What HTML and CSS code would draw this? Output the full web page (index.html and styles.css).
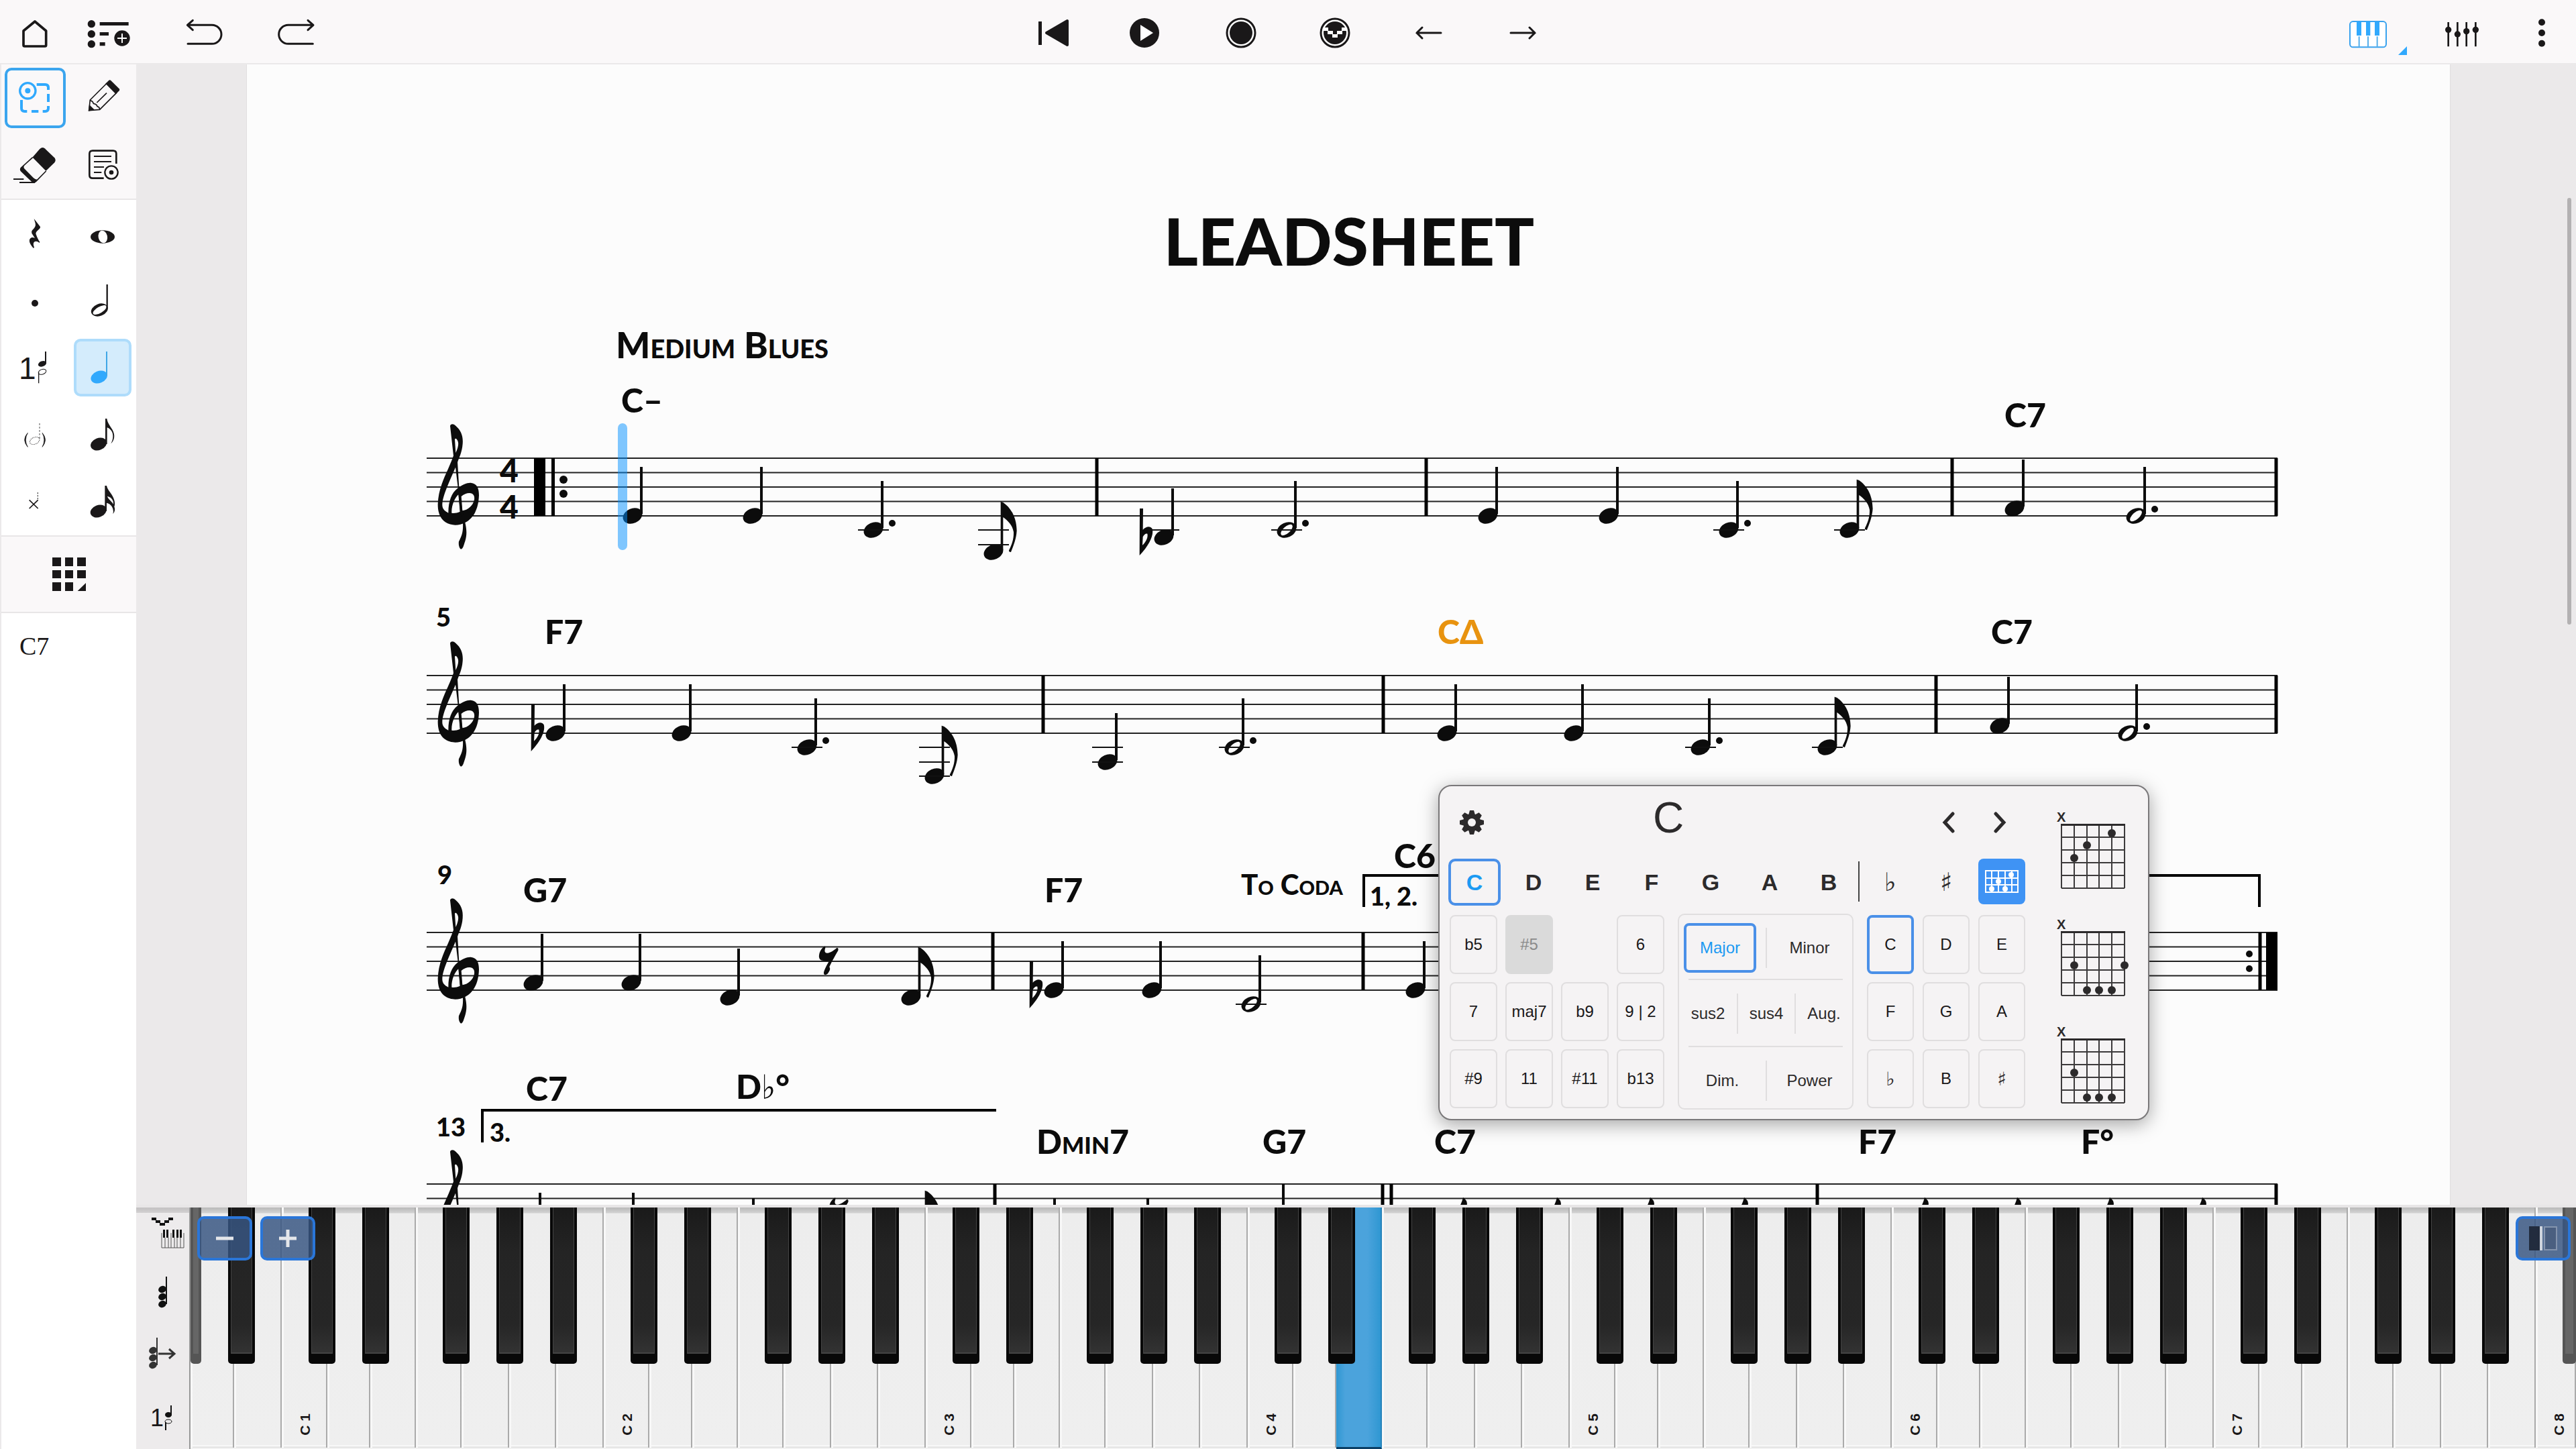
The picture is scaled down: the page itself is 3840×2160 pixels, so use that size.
FILE: index.html
```html
<!DOCTYPE html>
<html lang="en">
<head>
<meta charset="utf-8">
<title>Leadsheet</title>
<link rel="stylesheet" href="styles.css">
</head>
<body>
<header class="topbar">
  <div class="bar-group bar-left">
    <div class="bar-pair pair-tight">
      <button class="tool" aria-label="Home"><svg viewBox="60 0 192 282"><path d="M156 96 L206 138 V202 Q206 207 201 207 H110 Q105 207 105 202 V138 Z" fill="none" stroke="#1a1819" stroke-width="11" stroke-linejoin="round"/></svg></button>
      <button class="tool" aria-label="Add to setlist"><svg viewBox="390 0 192 282"><g fill="#1a1819"><circle cx="409" cy="107" r="17"/><circle cx="409" cy="152" r="17"/><circle cx="409" cy="197" r="17"/><path d="M446 99h129v15H446zM446 144h40v15h-40zM446 189h24v16h-24z"/><circle cx="546" cy="171" r="35"/></g><path d="M546 150v42M525 171h42" stroke="#fff" stroke-width="6"/></svg></button>
    </div>
    <div class="bar-pair pair-wide">
      <button class="tool" aria-label="Undo"><svg viewBox="819 0 192 282"><path d="M862 91 L838 112 L862 134 M840 112 H948 A42 42 0 0 1 948 196 H840" fill="none" stroke="#1a1819" stroke-width="9" stroke-linecap="round" stroke-linejoin="round"/></svg></button>
      <button class="tool" aria-label="Redo"><svg viewBox="1227 0 192 282"><path d="M1377 91 L1401 112 L1377 134 M1399 112 H1289 A42 42 0 0 0 1289 196 H1399" fill="none" stroke="#1a1819" stroke-width="9" stroke-linecap="round" stroke-linejoin="round"/></svg></button>
    </div>
  </div>
  <div class="bar-group bar-center">
    <button class="tool" aria-label="Back to start"><svg viewBox="1537 0 64 94"><path d="M1547 32h5v35h-5z" fill="#1a1819"/><path d="M1559 49 L1590 31 V67 Z" fill="#1a1819" stroke="#1a1819" stroke-width="4" stroke-linejoin="round"/></svg></button>
    <button class="tool" aria-label="Play"><svg viewBox="1677 0 64 94"><circle cx="1705" cy="49" r="22" fill="#1a1819"/><path d="M1699 37 L1718 49 L1699 61Z" fill="#fff"/></svg></button>
    <button class="tool" aria-label="Record"><svg viewBox="1817 0 64 94"><circle cx="1849" cy="49" r="21" fill="#fff" stroke="#1a1819" stroke-width="3"/><circle cx="1849" cy="49" r="17" fill="#1a1819"/></svg></button>
    <button class="tool" aria-label="Record MIDI"><svg viewBox="1957 0 64 94"><circle cx="1989" cy="49" r="21" fill="#fff" stroke="#1a1819" stroke-width="3"/><circle cx="1989" cy="49" r="17" fill="#1a1819"/><path d="M1971 41h8v5h-8zM1978 46h8v5h-8zM1985 51h8v5h-8zM1992 46h8v5h-8zM1999 41h8v5h-8z" fill="#fff"/></svg></button>
    <button class="tool" aria-label="Previous"><svg viewBox="2097 0 64 94"><path d="M2147 49H2111M2119 41L2111 49L2119 57" fill="none" stroke="#1a1819" stroke-width="3" stroke-linecap="round"/></svg></button>
    <button class="tool" aria-label="Next"><svg viewBox="2237 0 64 94"><path d="M2251 49H2287M2279 41L2287 49L2279 57" fill="none" stroke="#1a1819" stroke-width="3" stroke-linecap="round"/></svg></button>
  </div>
  <div class="bar-group bar-right">
    <button class="tool tool-piano" aria-label="Keyboard"><svg viewBox="354 0 192 282"><rect x="369" y="96" width="162" height="115" rx="14" fill="#fff" stroke="#3aa2ee" stroke-width="6"/><path d="M399 96h21v63h-21zM441 96h19v63h-19zM480 96h21v63h-21z" fill="#31a9fd"/><path d="M410 163v46M450 163v46M491 163v46" stroke="#55aeea" stroke-width="6"/></svg></button>
    <button class="tool tool-mixer" aria-label="Mixer"><svg viewBox="774 0 192 282"><path d="M809 99v109M850 99v109M890 99v109M931 99v109" stroke="#1a1819" stroke-width="8"/><g fill="#1a1819"><circle cx="809" cy="133" r="14"/><circle cx="850" cy="153" r="14"/><circle cx="890" cy="140" r="14"/><circle cx="931" cy="133" r="14"/></g></svg></button>
    <button class="tool" aria-label="More"><svg viewBox="1131 0 192 282"><g fill="#1a1819"><circle cx="1227" cy="100" r="15"/><circle cx="1227" cy="147" r="15"/><circle cx="1227" cy="194" r="15"/></g></svg></button>
  </div>
</header>

<div class="workspace">
  <aside class="sidebar">
    <div class="side-section side-tinted">
      <button class="cell" aria-label="Select"><span class="select-frame"></span><svg viewBox="6 288 300 300"><g fill="none" stroke="#31a9fd"><circle cx="124" cy="406" r="35" stroke-width="10"/><path d="M164 378H202Q216 378 216 392V402M216 420V456M216 474V484Q216 498 202 498H191M172 498H141M121 498H110Q96 498 96 484V447" stroke-width="12"/></g><circle cx="124" cy="406" r="12" fill="#31a9fd"/></svg></button>
      <button class="cell" aria-label="Pencil"><svg viewBox="306 288 300 300"><path d="M475 372L400 447L395 494L443 490L518 415Z" fill="#faf8f9" stroke="#1a1819" stroke-width="5" stroke-linejoin="round"/><path d="M469 374L484 359Q488 356 492 359L530 397Q534 402 530 406L515 421Z" fill="#1a1819"/><path d="M399 449Q412 452 415 463Q430 466 432 476Q442 478 443 490M430 459L474 416" fill="none" stroke="#1a1819" stroke-width="5"/><path d="M392 497L396 468L420 491Z" fill="#1a1819"/></svg></button>
      <button class="cell" aria-label="Eraser"><svg viewBox="6 588 300 300"><path d="M144 705L178 666Q189 655 200 664L244 706Q252 716 244 727L204 766Z" fill="#1a1819"/><path d="M146 704L95 750Q89 758 95 765L144 812Q152 819 160 812L206 765" fill="#faf8f9" stroke="#1a1819" stroke-width="5"/><path d="M110 738L95 750Q89 758 95 765L144 812Q152 819 160 812L166 802Q158 804 150 796L108 753Q104 746 110 738Z" fill="#1a1819"/><path d="M60 801H106M87 816H156" stroke="#1a1819" stroke-width="6"/></svg></button>
      <button class="cell" aria-label="Inspector"><svg viewBox="306 588 300 300"><path d="M461 797H411Q397 797 397 783V688Q397 674 411 674H503Q517 674 517 688V732" fill="none" stroke="#1a1819" stroke-width="8"/><path d="M417 699H495M417 723H495M417 747H462M417 771H451" stroke="#1a1819" stroke-width="6"/><circle cx="495" cy="771" r="29" fill="none" stroke="#1a1819" stroke-width="7"/><circle cx="495" cy="771" r="10" fill="#1a1819"/></svg></button>
    </div>
    <div class="side-section">
      <button class="cell" aria-label="Quarter rest"><svg viewBox="6 894 300 300"><path d="M152 978L180 1014Q181 1020 176 1024C162 1036 158 1042 162 1050C166 1062 172 1074 178 1082L176 1086C160 1072 142 1082 153 1106L150 1110C134 1094 126 1076 136 1066C142 1060 150 1062 156 1065L142 1043Q139 1036 144 1030C158 1016 160 1010 158 998Z" fill="#1a1819"/></svg></button>
      <button class="cell" aria-label="Whole note"><svg viewBox="306 894 300 300"><ellipse cx="456" cy="1059" rx="54" ry="29" fill="#1a1819"/><ellipse cx="457" cy="1059" rx="20" ry="28" fill="#fff" transform="rotate(-12 457 1059)"/></svg></button>
      <button class="cell" aria-label="Dotted"><svg viewBox="6 1194 300 300"><circle cx="156" cy="1356" r="15" fill="#1a1819"/></svg></button>
      <button class="cell" aria-label="Half note"><svg viewBox="306 1194 300 300"><ellipse cx="442" cy="1386" rx="39" ry="27" fill="#1a1819" transform="rotate(-22 442 1386)"/><ellipse cx="443" cy="1386" rx="34" ry="14" fill="#fff" transform="rotate(-30 443 1386)"/><path d="M476 1272V1380" stroke="#1a1819" stroke-width="7"/></svg></button>
      <button class="cell" aria-label="Voice 1"><span class="voice-number">1</span><svg viewBox="6 54 300 300"><ellipse cx="189" cy="187" rx="19" ry="12" fill="#1a1819" transform="rotate(-20 189 187)"/><path d="M204 132V184" stroke="#1a1819" stroke-width="6"/><ellipse cx="189" cy="223" rx="18" ry="11" fill="none" stroke="#1a1819" stroke-width="3" transform="rotate(-20 189 223)"/><path d="M173 225V274" stroke="#1a1819" stroke-width="4"/></svg></button>
      <button class="cell" aria-label="Quarter note" aria-pressed="true"><span class="note-frame"></span><svg viewBox="306 54 300 300"><ellipse cx="440" cy="246" rx="38" ry="27" fill="#31a9fd" transform="rotate(-22 440 246)"/><path d="M474 132V240" stroke="#3fa6e6" stroke-width="6"/></svg></button>
      <button class="cell" aria-label="Hidden note"><svg viewBox="6 354 300 300"><path d="M124 496Q96 527 124 559Q106 527 124 496ZM189 496Q216 527 189 559Q206 527 189 496Z" fill="#1a1819" stroke="#1a1819" stroke-width="2"/><ellipse cx="155" cy="531" rx="23" ry="15" fill="none" stroke="#1a1819" stroke-width="3" stroke-dasharray="3 4" transform="rotate(-24 155 531)"/><path d="M177 453V524" stroke="#777" stroke-width="4" stroke-dasharray="8 7"/></svg></button>
      <button class="cell" aria-label="Eighth note"><svg viewBox="306 354 300 300"><ellipse cx="438" cy="546" rx="37" ry="27" fill="#1a1819" transform="rotate(-22 438 546)"/><path d="M468 432H475C478 452 490 466 500 482C514 508 508 530 493 544C508 518 506 484 476 472V546H468Z" fill="#1a1819"/></svg></button>
      <button class="cell" aria-label="Cross note"><svg viewBox="6 654 300 300"><path d="M131 796L170 834M170 796L131 834" stroke="#1a1819" stroke-width="5"/><path d="M169 762V796" stroke="#555" stroke-width="4" stroke-dasharray="7 5"/></svg></button>
      <button class="cell" aria-label="Sixteenth note"><svg viewBox="306 654 300 300"><ellipse cx="437" cy="846" rx="37" ry="27" fill="#1a1819" transform="rotate(-22 437 846)"/><path d="M466 732H474C478 752 496 766 505 788C511 802 512 818 508 826C514 840 508 852 502 858C508 840 498 814 474 809V846H466ZM476 777C490 782 500 796 505 812C504 796 494 784 476 777Z" fill="#1a1819"/><path d="M477 779C480 792 496 800 504 815C504 798 494 784 477 779Z" fill="#fff"/></svg></button>
    </div>
    <button class="palette" aria-label="Palettes"><svg viewBox="0 0 150 150"><path d="M0 0h39v39H0zM57 0h36v39H57zM111 0h39v39h-39zM0 57h39v36H0zM57 57h36v36H57zM111 57h39v36h-39zM0 111h39v39H0zM57 111h36v39H57zM113 150L150 114V150Z" fill="#1a1819"/></svg></button>
    <div class="status-chord">C7</div>
  </aside>

  <main class="stage">
    <div class="canvas">
      <section class="sheet">
        <svg class="score" viewBox="368 96 3284 1700">
          <defs>
            <path id="staff" d="M0 0H2759M0 21.5H2759M0 43H2759M0 64.5H2759M0 86H2759" stroke="#222" stroke-width="2" fill="none"/>
            <g id="q"><ellipse rx="15" ry="11" transform="rotate(-24)"/><path d="M11-73h4V-3h-4z"/></g>
            <g id="h"><ellipse rx="15" ry="11" transform="rotate(-24)"/><ellipse rx="11" ry="5" transform="rotate(-42)" fill="#fcfcfc"/><path d="M11-73h4V-3h-4z"/></g>
            <g id="e"><ellipse rx="15" ry="11" transform="rotate(-24)"/><path transform="scale(.3333)" d="M32-226L43-222C75-200 103-160 104-95C102-60 90-30 78 0Q68 0 69-8C83-35 91-60 90-90C85-120 65-140 43-156V-10H32Z"/></g>
            <path id="fl" transform="scale(.3333)" fill-rule="evenodd" d="M-108-129L-93-129L-94-34C-80-50-60-52-52-38C-44-10-65 35-109 81ZM-94-2C-88-14-80-19-74-16C-70 0-80 20-96 35Z"/>
            <path id="r" transform="scale(.3333)" d="M-20-65Q-12-72-14-60C-20-45-15-36-5-37C10-38 25-50 38-61Q46-60 43-48C30-25 15 0 4 25Q10 35 3 45C-3 58-10 62-18 60Q-24 55-18 40C-12 25-3 10 3-2L-5 0C-15 0-20-3-28-4C-38-5-44-15-42-27C-40-45-30-58-20-65Z"/>
            <circle id="d" cx="28" cy="-10" r="5"/>
            <path id="sl" d="M-14 17Q-4 8 0-8Q6-4 6 2L0 17Z"/>
            <g id="clef" transform="scale(.3333) translate(-18 -369)"><path fill-rule="evenodd" d="M123 225C125 214 138 214 148 224C172 245 182 270 179 305C176 345 163 365 156 388C130 455 90 530 88 575C87 595 98 605 115 614C115 560 130 525 155 505C175 487 200 478 215 479C245 483 252 505 252 535C250 600 225 640 190 657C175 666 150 670 135 667C95 660 68 635 68 575C70 510 95 460 115 415C125 392 132 375 138 358ZM144 285L148 345C158 325 162 305 158 295C154 282 146 278 144 285ZM130 614C128 580 145 545 160 532L167 608C155 614 140 616 130 614ZM173 540C190 525 210 522 222 528C232 535 232 545 231 555C225 580 205 600 178 604Z"/><path d="M144 385L156 385L163 500L178 605L190 657C198 690 198 715 190 740C183 760 182 772 172 776C163 772 160 755 162 742C175 715 182 700 180 660L168 610L158 500Z"/></g>
          </defs>

          <text class="score-title" x="2011" y="396" text-anchor="middle">LEADSHEET</text>
          <text class="score-tempo" x="918" y="534">Medium Blues</text>

          <g class="ink">
            <use href="#staff" x="636" y="683"/><use href="#clef" x="636" y="683"/>
            <path d="M796 683h17v86h-17zM822 683h5v86h-5z" fill="#000"/><circle cx="840" cy="715" r="6"/><circle cx="840" cy="736" r="6"/>
            <use href="#q" x="943" y="769"/><use href="#q" x="1122" y="769"/><use href="#q" x="1302" y="790"/><use href="#d" x="1302" y="790"/><use href="#e" x="1481" y="823"/>
            <use href="#fl" x="1735" y="801"/><use href="#q" x="1735" y="801"/><use href="#h" x="1918" y="790"/><use href="#d" x="1918" y="790"/>
            <use href="#q" x="2218" y="769"/><use href="#q" x="2398" y="769"/><use href="#q" x="2577" y="790"/><use href="#d" x="2577" y="790"/><use href="#e" x="2757" y="790"/>
            <use href="#q" x="3003" y="758"/><use href="#h" x="3184" y="769"/><use href="#d" x="3184" y="769"/>
            <path class="ledger" d="M1279 790h46M1458 790h46M1458 812h46M1712 790h46M1895 790h46M2554 790h46M2734 790h46"/>
            <path class="bar" d="M1635 683v86M2126 683v86M2910 683v86M3393 683v86"/>

            <use href="#staff" x="636" y="1007"/><use href="#clef" x="636" y="1007"/>
            <use href="#fl" x="828" y="1093"/><use href="#q" x="828" y="1093"/><use href="#q" x="1016" y="1093"/><use href="#q" x="1203" y="1114"/><use href="#d" x="1203" y="1114"/><use href="#e" x="1393" y="1157"/>
            <use href="#q" x="1651" y="1136"/><use href="#h" x="1840" y="1114"/><use href="#d" x="1840" y="1114"/>
            <use href="#q" x="2157" y="1093"/><use href="#q" x="2346" y="1093"/><use href="#q" x="2535" y="1114"/><use href="#d" x="2535" y="1114"/><use href="#e" x="2724" y="1114"/>
            <use href="#q" x="2981" y="1082"/><use href="#h" x="3172" y="1093"/><use href="#d" x="3172" y="1093"/>
            <path class="ledger" d="M1180 1114h46M1370 1114h46M1370 1136h46M1370 1157h46M1628 1114h46M1628 1136h46M1817 1114h46M2512 1114h46M2701 1114h46"/>
            <path class="bar" d="M1555 1007v86M2062 1007v86M2886 1007v86M3393 1007v86"/>

            <use href="#staff" x="636" y="1390"/><use href="#clef" x="636" y="1390"/>
            <use href="#q" x="795" y="1465"/><use href="#q" x="941" y="1465"/><use href="#q" x="1088" y="1487"/><use href="#r" x="1235" y="1433"/><use href="#e" x="1358" y="1487"/>
            <use href="#fl" x="1571" y="1476"/><use href="#q" x="1571" y="1476"/><use href="#q" x="1717" y="1476"/><use href="#h" x="1865" y="1497"/>
            <use href="#q" x="2110" y="1476"/>
            <path class="ledger" d="M1842 1497h46"/>
            <path class="bar" d="M1480 1390v86M2032 1390v86M3369 1390v86"/>
            <path d="M3378 1390h17v86h-17z" fill="#000"/><circle cx="3353" cy="1422" r="5"/><circle cx="3353" cy="1444" r="5"/>
            <path class="volta" d="M2033 1352V1305H3368V1352"/>

            <use href="#staff" x="636" y="1765"/><use href="#clef" x="636" y="1765"/>
            <path d="M803 1778h4v20h-4zM942 1778h4v20h-4zM1121 1786h4v12h-4zM1570 1786h4v12h-4zM1709 1786h4v12h-4zM1911 1765h4v33h-4z"/>
            <use href="#r" x="1250" y="1808"/><use href="#e" x="1368" y="1850"/>
            <use href="#sl" x="2181" y="1793"/><use href="#sl" x="2321" y="1793"/><use href="#sl" x="2460" y="1793"/><use href="#sl" x="2600" y="1793"/>
            <use href="#sl" x="2869" y="1793"/><use href="#sl" x="3007" y="1793"/><use href="#sl" x="3145" y="1793"/><use href="#sl" x="3283" y="1793"/>
            <path class="bar" d="M1483 1765v40M2061 1765v40M2074 1765v40M2709 1765v40M3393 1765v40"/>
            <path class="volta" d="M719 1703V1655H1485"/>
          </g>

          <g class="time"><text x="759" y="719" text-anchor="middle">4</text><text x="759" y="773" text-anchor="middle">4</text></g>
          <g class="chord">
            <text x="926" y="615">C–</text><text x="2988" y="637">C7</text>
            <text x="812" y="960">F7</text><text class="current" x="2143" y="960">CΔ</text><text x="2968" y="960">C7</text>
            <text x="780" y="1345">G7</text><text x="1557" y="1345">F7</text><text x="2078" y="1294">C6</text>
            <text x="784" y="1641">C7</text><text x="1097" y="1638">D♭°</text><text class="caps" x="1545" y="1720">Dmin7</text><text x="1882" y="1720">G7</text><text x="2138" y="1720">C7</text><text x="2770" y="1720">F7</text><text x="3102" y="1720">F°</text>
            <text class="coda" x="1850" y="1334">To Coda</text>
          </g>
          <g class="measure">
            <text x="650" y="934">5</text><text x="652" y="1318">9</text><text x="650" y="1694">13</text><text x="2042" y="1350">1, 2.</text><text x="730" y="1702">3.</text>
          </g>
          <rect x="921" y="631" width="14" height="189" rx="7" fill="#0290ff" fill-opacity=".5"/>
        </svg>
      </section>
      <div class="scroll-thumb"></div>

      <section class="chord-panel" aria-label="Chord editor">
        <div class="panel-main">
          <div class="panel-head">
            <button class="plain" aria-label="Settings"><svg class="gear" viewBox="-18 -18 36 36"><g fill="#2c2a2b"><circle r="13"/><g id="teeth"><path d="M-3 -18h6l2 7h-10zM-3 18h6l2-7h-10zM-18 -3v6l7 2v-10zM18 -3v6l-7 2v-10z"/></g><use href="#teeth" transform="rotate(45)"/></g><circle r="6" fill="#f5f3f4"/></svg></button>
            <h2 class="panel-title">C</h2>
            <span></span>
            <button class="plain" aria-label="Previous chord"><svg class="chev" viewBox="0 0 20 32"><path d="M16 3L4 16L16 29" fill="none" stroke="#2c2a2b" stroke-width="5" stroke-linecap="round"/></svg></button>
            <button class="plain" aria-label="Next chord"><svg class="chev" viewBox="0 0 20 32"><path d="M4 3L16 16L4 29" fill="none" stroke="#2c2a2b" stroke-width="5" stroke-linecap="round"/></svg></button>
          </div>
          <div class="roots">
            <div class="root-names"><button class="root on">C</button><button class="root">D</button><button class="root">E</button><button class="root">F</button><button class="root">G</button><button class="root">A</button><button class="root">B</button></div>
            <div class="root-mods"><button class="mod">♭</button><button class="mod">♯</button><button class="frets-toggle" aria-label="Fretboards"><svg viewBox="0 0 50 34"><path d="M1 1H49V33H1ZM1 12H49M1 22H49M10 1V33M20 1V33M30 1V33M40 1V33" fill="none" stroke="#fff" stroke-width="2"/><g fill="#fff"><circle cx="39" cy="7" r="4"/><circle cx="20" cy="17" r="4"/><circle cx="10" cy="28" r="4"/><circle cx="30" cy="28" r="4"/></g></svg></button></div>
          </div>
          <div class="options">
            <div class="ext-grid">
              <button class="opt">b5</button><button class="opt" disabled>#5</button><span></span><button class="opt">6</button>
              <button class="opt">7</button><button class="opt">maj7</button><button class="opt">b9</button><button class="opt">9 | 2</button>
              <button class="opt">#9</button><button class="opt">11</button><button class="opt">#11</button><button class="opt">b13</button>
            </div>
            <div class="quality">
              <div class="q-row two"><button class="q on">Major</button><button class="q">Minor</button></div>
              <div class="q-row three"><button class="q">sus2</button><button class="q">sus4</button><button class="q">Aug.</button></div>
              <div class="q-row two"><button class="q">Dim.</button><button class="q">Power</button></div>
            </div>
            <div class="bass-grid">
              <button class="opt on">C</button><button class="opt">D</button><button class="opt">E</button>
              <button class="opt">F</button><button class="opt">G</button><button class="opt">A</button>
              <button class="opt sym">♭</button><button class="opt">B</button><button class="opt sym">♯</button>
            </div>
          </div>
        </div>
        <div class="frets">
          <div class="fret"><span class="mute">X</span><svg viewBox="-7 -2 108 104"><path class="fret-grid" d="M0 0H94M0 19H94M0 38H94M0 57H94M0 76H94M0 95H94M0 0V95M19 0V95M38 0V95M56 0V95M75 0V95M94 0V95"/><path d="M-1 -1h96v3h-96z"/><circle cx="75" cy="13" r="6"/><circle cx="38" cy="31" r="6"/><circle cx="19" cy="50" r="6"/></svg></div>
          <div class="fret"><span class="mute">X</span><svg viewBox="-7 -2 108 104"><path class="fret-grid" d="M0 0H94M0 19H94M0 38H94M0 57H94M0 76H94M0 95H94M0 0V95M19 0V95M38 0V95M56 0V95M75 0V95M94 0V95"/><path d="M-1 -1h96v3h-96z"/><circle cx="19" cy="50" r="6"/><circle cx="94" cy="50" r="6"/><circle cx="38" cy="87" r="6"/><circle cx="56" cy="87" r="6"/><circle cx="75" cy="87" r="6"/></svg></div>
          <div class="fret"><span class="mute">X</span><svg viewBox="-7 -2 108 104"><path class="fret-grid" d="M0 0H94M0 19H94M0 38H94M0 57H94M0 76H94M0 95H94M0 0V95M19 0V95M38 0V95M56 0V95M75 0V95M94 0V95"/><path d="M-1 -1h96v3h-96z"/><circle cx="19" cy="50" r="6"/><circle cx="38" cy="87" r="6"/><circle cx="56" cy="87" r="6"/><circle cx="75" cy="87" r="6"/></svg></div>
        </div>
      </section>
    </div>

    <section class="keyboard" aria-label="Piano">
      <div class="key-tools">
        <button class="key-tool" aria-label="MIDI step input"><svg viewBox="0 0 80 90"><path d="M23 15h7v4h-7zM29 19h7v4h-7zM35 23h8v4h-8zM42 19h7v4h-7zM48 15h7v4h-7z" fill="#111"/><path d="M38 38V60H71V38M43 45V60M48 45V60M52 38V60M57 45V60M61 45V60M66 45V60" fill="none" stroke="#555" stroke-width="1"/><path d="M40 33h3v12h-3zM45 33h3v12h-3zM54 33h3v12h-3zM60 33h3v12h-3zM65 33h3v12h-3z" fill="#111"/></svg></button>
        <button class="key-tool" aria-label="Chord input"><svg viewBox="0 0 80 90"><g fill="#111"><ellipse cx="39" cy="32" rx="6" ry="5" transform="rotate(-25 39 32)"/><ellipse cx="39" cy="43" rx="6" ry="5" transform="rotate(-25 39 43)"/><ellipse cx="39" cy="54" rx="6" ry="5" transform="rotate(-25 39 54)"/><path d="M44 13h2v41h-2z"/></g></svg></button>
        <button class="key-tool" aria-label="Chord input and advance"><svg viewBox="0 0 80 90"><g fill="#333"><ellipse cx="25" cy="33" rx="6" ry="5" transform="rotate(-25 25 33)"/><ellipse cx="25" cy="44" rx="6" ry="5" transform="rotate(-25 25 44)"/><ellipse cx="25" cy="55" rx="6" ry="5" transform="rotate(-25 25 55)"/><path d="M30 14h2v41h-2z"/></g><path d="M33 38H56M49 31L57 38L49 45" fill="none" stroke="#333" stroke-width="3"/></svg></button>
        <button class="key-tool" aria-label="Voice 1"><span class="voice-small">1</span><svg viewBox="0 0 80 90"><ellipse cx="48" cy="39" rx="5" ry="4" fill="#111"/><path d="M52 25V40M44 50V62" stroke="#111" stroke-width="2"/><ellipse cx="48" cy="49" rx="5" ry="3" fill="none" stroke="#111" stroke-width="1"/></svg></button>
      </div>
      <div class="keys" id="keys">
        <div class="key-controls">
          <button class="zoom-btn" aria-label="Zoom out"><svg viewBox="0 0 26 26"><path d="M0 13H26" stroke="#e4e6ea" stroke-width="5"/></svg></button>
          <button class="zoom-btn" aria-label="Zoom in"><svg viewBox="0 0 26 26"><path d="M0 13H26M13 0V26" stroke="#e4e6ea" stroke-width="5"/></svg></button>
          <button class="zoom-btn zoom-end" aria-label="Key layout"><svg class="wide" viewBox="0 0 42 36"><path d="M0 0h16v36H0z" fill="#222c3e"/><path d="M16 0h4v36h-4z" fill="#cfd5de"/><path d="M23 1h18v34H23z" fill="#4a5f80" stroke="#8494ad" stroke-width="2"/></svg></button>
        </div>
      </div>
    </section>
  </main>
</div>
<script src="script.js"></script>
</body>
</html>
```
FILE: styles.css
```css
* { box-sizing: border-box; }
html, body { height: 100%; margin: 0; }
body {
  display: flex;
  flex-direction: column;
  background: #ebe9ea;
  color: #1a1819;
  font-family: "Liberation Sans", Arial, sans-serif;
  overflow: hidden;
}
button {
  margin: 0;
  padding: 0;
  border: 0;
  background: none;
  color: inherit;
  font: inherit;
}
svg { display: block; }

/* Top bar */
.topbar {
  display: grid;
  grid-template-columns: 1fr auto 1fr;
  flex: none;
  height: 96px;
  background: #faf8f9;
  border-bottom: 2px solid #ebe9ea;
}
.bar-group, .bar-pair { display: flex; }
.bar-left { padding-left: 20px; gap: 79px; }
.pair-tight { gap: 46px; }
.pair-wide { gap: 72px; }
.bar-center { gap: 76px; }
.bar-right { justify-content: flex-end; padding-right: 19px; }
.tool { width: 64px; height: 94px; position: relative; }
.tool svg { width: 100%; height: 100%; }
.tool-piano { margin-right: 76px; }
.tool-mixer { margin-right: 55px; }
.tool-piano::after {
  content: "";
  position: absolute;
  left: 77px;
  top: 69px;
  border-left: 13px solid transparent;
  border-bottom: 13px solid #31a9fd;
}

/* Left palette */
.workspace { display: flex; flex: 1; min-height: 0; }
.sidebar {
  flex: none;
  width: 203px;
  background: #fff;
  border-left: 2px solid #ebe9ea;
}
.side-section {
  display: grid;
  grid-template-columns: 1fr 1fr;
  grid-auto-rows: 100px;
  border-bottom: 2px solid #e8e6e7;
}
.side-tinted, .palette { background: #faf8f9; }
.cell { position: relative; }
.cell svg { position: relative; width: 100px; height: 100px; }
.select-frame, .note-frame { position: absolute; border: 4px solid #3ba5ee; border-radius: 10px; }
.select-frame { inset: 5px; }
.note-frame { inset: 7px; border-color: #aedcfb; background: #d4ecfc; }
.voice-number { position: absolute; left: 26px; top: 26px; font-size: 46px; line-height: 50px; }
.palette {
  display: flex;
  align-items: center;
  justify-content: center;
  width: 100%;
  height: 114px;
  border-bottom: 2px solid #e8e6e7;
}
.palette svg { width: 50px; height: 50px; }
.status-chord {
  padding: 27px;
  font-family: "Liberation Serif", "Times New Roman", serif;
  font-size: 38px;
  line-height: 44px;
}

/* Score */
.stage { display: flex; flex-direction: column; flex: 1; min-width: 0; }
.canvas { position: relative; flex: 1; min-height: 0; overflow: hidden; }
.sheet {
  height: 100%;
  margin: 0 188px 0 165px;
  background: #fcfcfc;
  box-shadow: 0 0 0 1px #e1dfe0;
}
.score { width: 100%; fill: #0c0c0c; }
.score text { font-family: Lato, "DejaVu Sans Condensed", sans-serif; font-weight: 900; }
.score .score-title { font-size: 98px; }
.score .score-tempo { font-size: 54px; font-variant: small-caps; }
.time text { font-size: 48px; }
.chord text { font-size: 50px; }
.chord .caps { font-size: 50px; font-variant: small-caps; }
.chord .coda { font-size: 42px; font-variant: small-caps; }
.chord .current { fill: #e8930f; }
.measure text { font-size: 38px; }
.ledger { stroke: #111; stroke-width: 2; }
.bar { stroke: #000; stroke-width: 5; }
.volta { fill: none; stroke: #000; stroke-width: 4; }
.scroll-thumb {
  position: absolute;
  right: 7px;
  top: 199px;
  width: 6px;
  height: 636px;
  border-radius: 3px;
  background: #b3b1b2;
}

/* Chord editor */
.chord-panel {
  position: absolute;
  right: 636px;
  bottom: 126px;
  display: flex;
  width: 1060px;
  padding: 0 13px;
  border: 2px solid #7a787a;
  border-radius: 20px;
  background: #f5f3f4;
  box-shadow: 0 6px 28px rgba(0, 0, 0, .35);
}
.panel-main { width: 860px; padding-bottom: 16px; }
.panel-head {
  display: grid;
  grid-template-columns: 70px 516px 1fr 76px 76px;
  align-items: center;
  height: 108px;
}
.plain { display: flex; justify-content: center; }
.gear { width: 36px; height: 36px; }
.chev { width: 20px; height: 32px; }
.panel-title {
  margin: 0;
  padding-bottom: 14px;
  color: #2c2a2b;
  font-size: 64px;
  font-weight: normal;
  line-height: 64px;
  text-align: center;
}
.roots { display: flex; height: 70px; margin-bottom: 14px; }
.root-names {
  display: flex;
  flex: 1;
  gap: 10px;
  background: linear-gradient(#444, #444) right 11px top 4px / 2px 60px no-repeat;
}
.root { width: 78px; font-size: 34px; font-weight: bold; color: #2c2a2b; }
.root.on { border: 4px solid #4a90e8; border-radius: 10px; color: #1c9af2; }
.root-mods, .bass-grid { display: grid; grid-template-columns: repeat(3, 70px); gap: 13px; }
.mod, .sym { font-family: "DejaVu Sans", sans-serif; color: #2c2a2b; }
.mod { font-size: 38px; line-height: 40px; }
.frets-toggle {
  display: flex;
  align-items: center;
  justify-content: center;
  height: 68px;
  border-radius: 8px;
  background: #3f93f4;
}
.frets-toggle svg { width: 50px; height: 34px; }
.options { display: grid; grid-template-columns: 320px 262px 236px; gap: 20px; padding-left: 2px; }
.ext-grid { display: grid; grid-template-columns: repeat(4, 1fr); gap: 12px; }
.bass-grid { row-gap: 12px; }
.ext-grid, .bass-grid { grid-auto-rows: 88px; }
.opt { border: 2px solid #e0dedf; border-radius: 8px; font-size: 24px; }
.opt.sym { font-size: 28px; }
.opt:disabled { border-color: #dadada; background: #dadada; color: #8a8a8a; }
.opt.on { border: 4px solid #4a90e8; }
.quality {
  display: grid;
  grid-template-rows: 97px 100px 91px;
  margin: -2px 0;
  border: 2px solid #e0dedf;
  border-radius: 10px;
}
.q-row {
  display: grid;
  align-items: center;
  background: linear-gradient(#e0dedf, #e0dedf) 14px bottom / 230px 2px no-repeat;
}
.q-row:last-child { padding-top: 8px; background: none; }
.two { grid-template-columns: 1fr 1fr; }
.three { grid-template-columns: 1fr 1fr 1fr; }
.q { height: 60px; font-size: 24px; color: #2c2a2b; }
.q + .q { border-left: 2px solid #e0dedf; }
.q.on { height: 74px; margin: 0 14px 0 7px; border: 4px solid #4a90e8; border-radius: 8px; color: #1c9af2; }
.frets { display: flex; flex-direction: column; flex: 1; gap: 38px; padding-top: 37px; }
.fret { width: 108px; margin-left: 47px; }
.fret svg { width: 108px; height: 104px; fill: #2c2a2b; }
.fret .fret-grid { fill: none; stroke: #3c3a3b; stroke-width: 2; }
.mute { display: block; height: 18px; font-size: 20px; font-weight: bold; line-height: 18px; color: #2c2a2b; }

/* Piano */
.keyboard { display: flex; flex: none; height: 364px; border-top: 4px solid #e8e6e7; background: #f2f2f2; }
.key-tools {
  display: grid;
  flex: none;
  grid-auto-rows: 90px;
  width: 81px;
  background: linear-gradient(#c6c4c5 0 2px, #d3d1d2 8px, #edebec 8px);
  border-right: 2px solid #999;
}
.key-tool { position: relative; }
.key-tool svg { width: 80px; height: 90px; }
.voice-small { position: absolute; left: 21px; top: 24px; font-size: 36px; line-height: 40px; }
.keys { position: relative; display: flex; flex: 1; min-width: 0; }
.white {
  position: relative;
  flex-basis: 0;
  min-width: 0;
  height: 358px;
  border-right: 2px solid #aaa;
  background: linear-gradient(#b9b9b9, #d2d2d2 8px, #ededed 9px, #efefef 354px, #fff 355px, #d8d8d8);
  box-shadow: inset 3px 0 #f8f8f8;
}
.white.down {
  border-right-color: #2784bb;
  border-bottom: 3px solid #0b3f66;
  height: 360px;
  background: linear-gradient(90deg, #2f97d2, #4ba3dc 20%, #4ba3dc 70%, #2f97d2);
  box-shadow: none;
}
.key-name {
  position: absolute;
  left: 24px;
  bottom: 18px;
  font-size: 21px;
  font-weight: bold;
  line-height: 22px;
  writing-mode: vertical-rl;
  transform: rotate(180deg);
  white-space: nowrap;
}
.black {
  position: absolute;
  top: 0;
  height: 233px;
  border: solid #080808;
  border-width: 0 4px 15px;
  border-radius: 0 0 5px 5px;
  background: linear-gradient(#1a1a1a, #242424 30%, #262626 80%, #333);
  box-shadow: inset 1px 0 #444, inset -1px 0 #444, inset 0 -2px #444;
}
.black.off { border-color: #555; background: #666; box-shadow: none; }
.key-controls { position: absolute; z-index: 1; inset: 13px 8px auto 10px; display: flex; gap: 12px; }
.zoom-btn {
  display: flex;
  align-items: center;
  justify-content: center;
  width: 82px;
  height: 66px;
  border: 4px solid #2a76d8;
  border-radius: 10px;
  background: rgba(56, 86, 130, .84);
}
.zoom-btn svg { width: 26px; height: 26px; }
.zoom-btn .wide { width: 42px; height: 36px; }
.zoom-end { margin-left: auto; }
```
FILE: script.js
```js
// Builds an 88-key piano, A0 to C8. Widths are shares of a 480-unit octave.
const keys = document.getElementById('keys');
const START = 284, TOTAL = 3556, C1 = 420;
const WIDTHS = { C: 68, D: 64, E: 68, F: 68, G: 71, A: 70, B: 71 };

function white(name, octave, width) {
  const key = document.createElement('button');
  key.className = 'white' + (name === 'E' && octave === 4 ? ' down' : '');
  key.style.flexGrow = width;
  if (name === 'C') {
    const label = document.createElement('span');
    label.className = 'key-name';
    label.textContent = 'C ' + octave;
    key.append(label);
  } else {
    key.setAttribute('aria-label', name + octave);
  }
  keys.append(key);
}

function black(from, to, off) {
  const key = document.createElement('button');
  key.className = 'black' + (off ? ' off' : '');
  key.setAttribute('aria-label', 'Black key');
  key.style.left = (from - START) / TOTAL * 100 + '%';
  key.style.width = (to - from) / TOTAL * 100 + '%';
  keys.append(key);
}

white('A', 0, 65);
white('B', 0, 71);
for (let octave = 1; octave <= 7; octave++) {
  for (const name in WIDTHS) white(name, octave, WIDTHS[name]);
}
white('C', 8, 60);

black(START, 300, true);
black(340, 380);
for (let octave = 0; octave < 7; octave++) {
  for (const offset of [40, 120, 240, 320, 400]) {
    const x = C1 + octave * 480 + offset;
    black(x, x + 40);
  }
}
black(3820, 3840, true);
```
